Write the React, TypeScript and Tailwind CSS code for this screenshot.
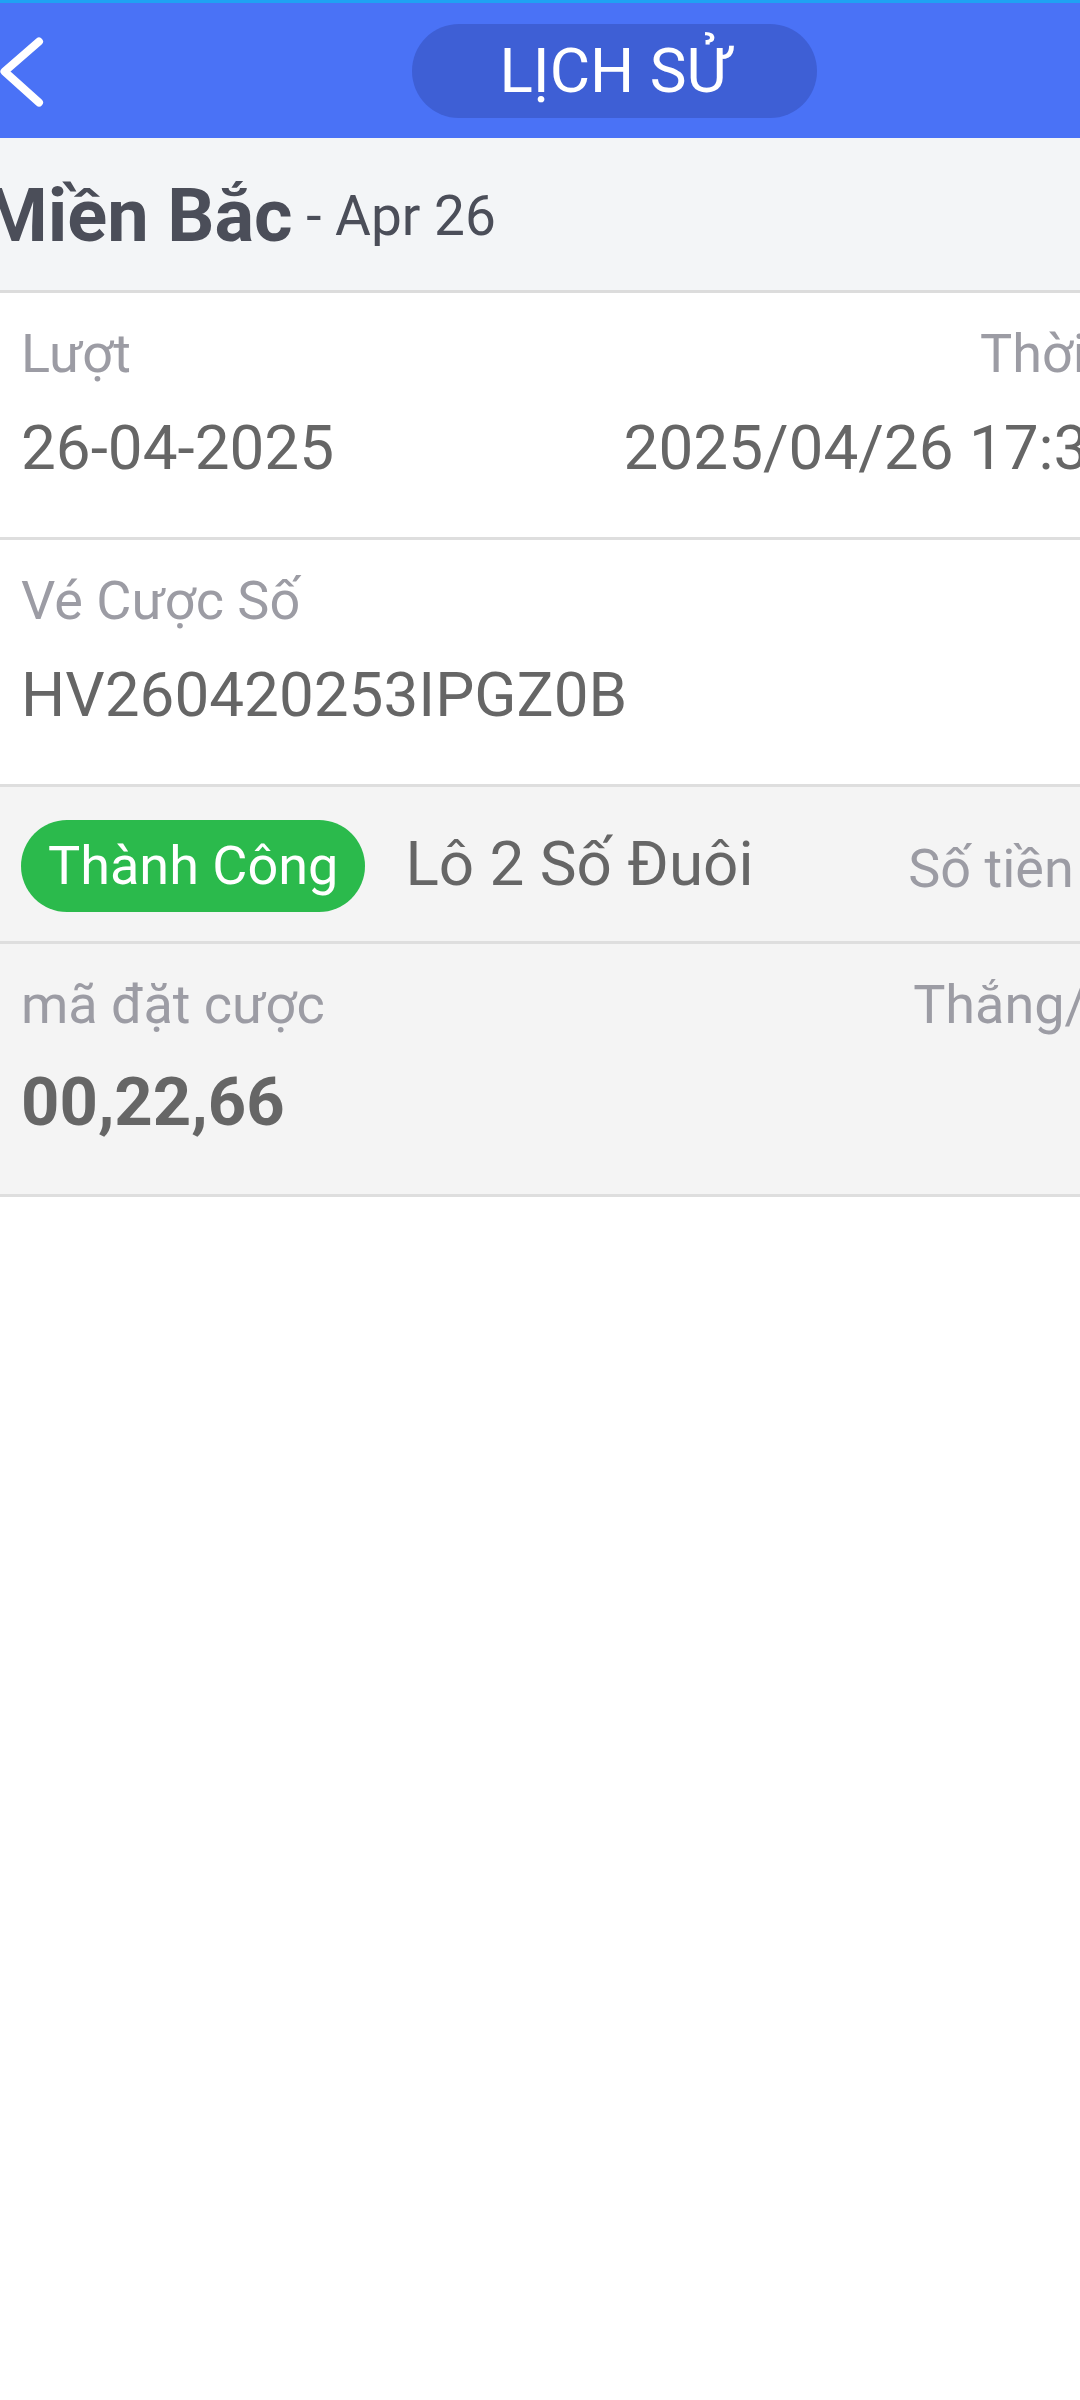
import React from "react";

const label = "text-[54px] leading-[64px] text-[#9c9ca4] whitespace-nowrap";
const value = "text-[62px] leading-[74px] text-[#666666] whitespace-nowrap";

function BackIcon() {
  return (
    <svg width="48" height="72" viewBox="0 0 48 72" fill="none" aria-hidden>
      <polyline
        points="39,6.5 4.5,36.5 39,67.5"
        stroke="#ffffff"
        strokeWidth="8"
        strokeLinecap="round"
        strokeLinejoin="round"
      />
    </svg>
  );
}

function InfoRow({
  left,
  leftValue,
  right,
  rightValue,
  rightClass = "",
  bold,
  tone,
  height,
}: {
  left: string;
  leftValue: string;
  right?: string;
  rightValue?: string;
  rightClass?: string;
  bold?: boolean;
  tone: "white" | "grey";
  height: string;
}) {
  return (
    <div
      className={`${height} border-b-[3px] border-[#dedede] px-[21px] pt-[29px] ${
        tone === "white" ? "bg-white" : "bg-[#f4f4f4]"
      }`}
    >
      <div className="flex justify-between">
        <div className="flex flex-col">
          <p className={label}>{left}</p>
          {bold ? (
            <p className="mt-[26px] text-[67px] font-bold leading-[78px] text-[#666666]">{leftValue}</p>
          ) : (
            <p className={`mt-[25px] ${value}`}>{leftValue}</p>
          )}
        </div>
        {right ? (
          <div className="flex flex-col items-end">
            <p className={`${label} ${rightClass}`}>{right}</p>
            {rightValue ? <p className={`mt-[25px] ${value}`}>{rightValue}</p> : null}
          </div>
        ) : null}
      </div>
    </div>
  );
}

export default function App() {
  return (
    <div className="min-h-[2400px] w-[1080px] overflow-hidden bg-white font-['Roboto',sans-serif]">
      <div className="w-[1229px]">
        <header className="grid h-[138px] grid-cols-[1fr_auto_1fr] items-center border-t-[3px] border-[#1fa2f3] bg-[#4a72f6]">
          <div className="flex items-center">
            <BackIcon />
          </div>
          <div className="flex h-[94px] w-[405px] items-center justify-center rounded-full bg-[#3e5fd5] text-[62px] leading-none text-white">
            LỊCH SỬ
          </div>
          <div />
        </header>

        <div className="h-[155px] border-b-[3px] border-[#dcdcdc] bg-[#f3f5f7] pt-[34px]">
          <p className="-ml-[17px] whitespace-nowrap text-[74px] font-bold leading-[87px] text-[#4b4e59]">
            Miền Bắc
            <span className="align-[6px] text-[55px] font-normal leading-none"> - Apr 26</span>
          </p>
        </div>

        <InfoRow
          tone="white"
          height="h-[247px]"
          left="Lượt"
          leftValue="26-04-2025"
          right="Thời gian"
          rightValue="2025/04/26 17:35:08"
          rightClass="mr-[6px]"
        />
        <InfoRow tone="white" height="h-[247px]" left="Vé Cược Số" leftValue="HV260420253IPGZ0B" />

        <div className="flex h-[157px] items-center border-b-[3px] border-[#dedede] bg-[#f4f4f4] px-[21px] pt-[3px]">
          <span className="flex h-[92px] items-center rounded-full bg-[#2bba4c] px-[27px] text-[54px] leading-none whitespace-nowrap text-white">
            Thành Công
          </span>
          <span className="ml-[40px] -mt-[4px] text-[62px] leading-none whitespace-nowrap text-[#666666]">
            Lô 2 Số Đuôi
          </span>
          <span className="ml-auto mt-[6px] text-[54px] leading-none whitespace-nowrap text-[#9c9ca4]">
            Số tiền cược
          </span>
        </div>

        <InfoRow tone="grey" height="h-[253px]" left="mã đặt cược" leftValue="00,22,66" right="Thắng/Thua" bold />
      </div>
    </div>
  );
}
